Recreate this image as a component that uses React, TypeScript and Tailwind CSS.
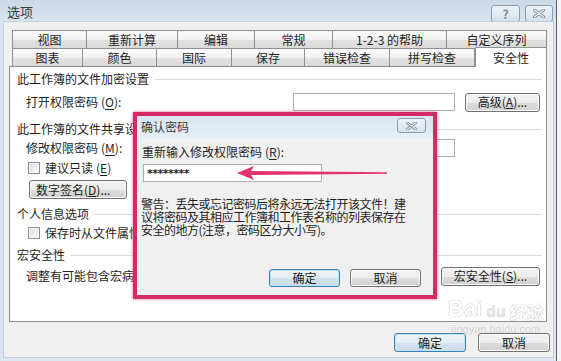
import type { ReactNode } from "react"
import clsx from "clsx"

const FONT = "font-['Noto_Sans_CJK_SC','Noto_Sans',sans-serif]"

function Btn({
  children,
  className,
  primary,
}: {
  children: ReactNode
  className?: string
  primary?: boolean
}) {
  return (
    <div
      className={clsx(
        "flex items-center justify-center rounded-[3px] border text-[12px] leading-none text-[#1b1b1b]",
        primary
          ? "border-[#3c7fb1] bg-[linear-gradient(#f0f6fa_0%,#e4eef5_50%,#d5e3ee_51%,#c9dbe8_100%)] shadow-[inset_0_0_0_1px_#bfe6f7]"
          : "border-[#707070] bg-[linear-gradient(#f4f4f4_0%,#ececec_50%,#dedede_51%,#d0d0d0_100%)] shadow-[inset_0_0_0_1px_#fbfbfb]",
        className
      )}
    >
      {children}
    </div>
  )
}

function Key({ k }: { k: string }) {
  return (
    <span className="ml-[3px]">
      (<u className="underline-offset-2">{k}</u>)
    </span>
  )
}

function Section({ title, className }: { title: string; className?: string }) {
  return (
    <div className={clsx("flex h-[14px] items-center pl-[7px]", className)}>
      <span className="text-[12px] leading-none whitespace-nowrap">{title}</span>
      <div className="ml-[6px] mr-[4px] h-px flex-1 bg-[#d5dfe5]" />
    </div>
  )
}

function Check({ children, className }: { children: ReactNode; className?: string }) {
  return (
    <div className={clsx("flex h-[14px] items-center pl-[18px]", className)}>
      <div className="h-[12px] w-[12px] border border-[#8e8f8f] bg-[linear-gradient(135deg,#dcdcdc,#fbfbfb)] shadow-[inset_0_0_0_1px_#f4f4f4]" />
      <span className="ml-[5px] text-[12px] leading-none whitespace-nowrap">{children}</span>
    </div>
  )
}

function Tab({ label, w, first, selected }: { label: string; w: number; first?: boolean; selected?: boolean }) {
  return (
    <div
      style={{ width: w }}
      className={clsx(
        "flex shrink-0 items-center justify-center border-t border-r border-[#8d9096] text-[12px] leading-none",
        first && "border-l",
        selected
          ? "relative z-10 -mt-[1px] h-[20px] border-l bg-white"
          : "h-[18px] bg-[linear-gradient(#fdfdfd_0%,#f0f0f0_50%,#e2e2e2_51%,#dadada_100%)]"
      )}
    >
      {label}
    </div>
  )
}

function CloseGlyph({ w = 12, h = 9 }: { w?: number; h?: number }) {
  return (
    <svg width={w} height={h} viewBox="0 0 12 9">
      <path d="M1.5 1 L10.5 8 M10.5 1 L1.5 8" stroke="#7f8b99" strokeWidth="3" strokeLinecap="round" />
      <path d="M1.5 1 L10.5 8 M10.5 1 L1.5 8" stroke="#f5f7fa" strokeWidth="1.2" strokeLinecap="round" />
    </svg>
  )
}

export default function App() {
  const row1 = [
    ["视图", 75],
    ["重新计算", 91],
    ["编辑", 77],
    ["常规", 78],
    ["1-2-3 的帮助", 114],
    ["自定义序列", 100],
  ] as const
  const row2 = [
    ["图表", 71],
    ["颜色", 74],
    ["国际", 75],
    ["保存", 73],
    ["错误检查", 85],
    ["拼写检查", 85],
  ] as const

  return (
    <div className={clsx("relative flex h-[361px] w-[561px] overflow-hidden bg-[#f4f4f4] text-[#1e1e1e]", FONT)}>
      {/* window frame */}
      <div className="flex h-full w-[557px] flex-col border-r border-[#5d5f62] bg-[linear-gradient(#cad8e7_0px,#d9e4ef_22px,#dce6f0_100%)]">
        {/* title bar */}
        <div className="flex h-[22px] shrink-0 items-start">
          <span className="pl-[7px] pt-[5px] text-[13px] leading-none text-[#3a3a3a]">选项</span>
          <div className="ml-auto mr-[3px] mt-[5px] flex gap-[5px]">
            <div className="flex h-[17px] w-[29px] items-center justify-center rounded-[3px] border border-[#8d9db0] bg-[linear-gradient(#eef3f8,#d6e1ec)] text-[12px] font-bold leading-none text-[#7b8795]">
              ?
            </div>
            <div className="flex h-[17px] w-[28px] items-center justify-center rounded-[3px] border border-[#8d9db0] bg-[linear-gradient(#eef3f8,#d6e1ec)]">
              <CloseGlyph />
            </div>
          </div>
        </div>

        {/* client area */}
        <div className="mb-[4px] ml-[4px] mr-[3px] flex flex-1 flex-col bg-[#f0f0f0] pt-[8px] shadow-[0_0_0_1px_#c3d0dc]">
          {/* tabs */}
          <div className="ml-[8px] flex w-[535px]">
            {row1.map(([l, w], i) => (
              <Tab key={l} label={l} w={w} first={i === 0} />
            ))}
          </div>
          <div className="ml-[8px] flex h-[18px] w-[535px] items-start">
            {row2.map(([l, w], i) => (
              <Tab key={l} label={l} w={w} first={i === 0} />
            ))}
            <Tab label="安全性" w={72} selected />
          </div>

          {/* panel */}
          <div className="ml-[5px] flex h-[256px] w-[538px] flex-col border border-[#898c95] bg-white">
            <Section title="此工作簿的文件加密设置" className="mt-[5px]" />
            <div className="mt-[6px] flex h-[20px] items-center">
              <span className="pl-[16px] text-[12px] leading-none">
                打开权限密码<Key k="O" />:
              </span>
              <div className="ml-auto h-[18px] w-[162px] border border-[#abadb3] bg-white" />
              <Btn className="ml-[10px] mr-[6px] h-[19px] w-[75px]">
                高级(<u>A</u>)...
              </Btn>
            </div>

            <Section title="此工作簿的文件共享设置" className="mt-[10px]" />
            <div className="mt-[2px] flex h-[20px] items-center">
              <span className="pl-[16px] text-[12px] leading-none">
                修改权限密码<Key k="M" />:
              </span>
              <div className="ml-auto mr-[91px] h-[18px] w-[162px] border border-[#abadb3] bg-white" />
            </div>
            <Check className="mt-[3px]">
              建议只读<Key k="E" />
            </Check>
            <div className="mt-[5px] pl-[19px]">
              <Btn className="h-[19px] w-[98px] justify-start pl-[6px]">
                数字签名(<u>D</u>)...
              </Btn>
            </div>

            <Section title="个人信息选项" className="mt-[8px]" />
            <Check className="mt-[5px]">保存时从文件属性中删除个人信息</Check>

            <Section title="宏安全性" className="mt-[8px]" />
            <div className="mt-[3px] flex h-[22px] items-center">
              <span className="pl-[16px] text-[12px] leading-none">调整有可能包含宏病毒的文件的安全级别</span>
              <Btn className="ml-auto mr-[6px] h-[19px] w-[99px]">
                宏安全性(<u>S</u>)...
              </Btn>
            </div>
          </div>

          {/* bottom buttons */}
          <div className="mr-[3px] mt-[11px] flex justify-end gap-[12px]">
            <Btn primary className="h-[19px] w-[72px]">
              确定
            </Btn>
            <Btn className="h-[19px] w-[72px]">取消</Btn>
          </div>
        </div>
      </div>

      {/* highlighted confirm dialog lying over the options window */}
      <div className="absolute left-[133px] top-[112px] flex h-[187px] w-[304px] flex-col border-[4px] border-[#d52a64] shadow-[0_0_3px_#e06a92]">
        <div className="flex h-[22px] shrink-0 items-start bg-[linear-gradient(#d9e5f1,#e6eef6)]">
          <span className="pl-[4px] pt-[5px] text-[12px] leading-none text-[#3a3a3a]">确认密码</span>
          <div className="ml-auto mr-[7px] mt-[2px] flex h-[15px] w-[29px] items-center justify-center rounded-[3px] border border-[#8d9db0] bg-[linear-gradient(#eef3f8,#d6e1ec)]">
            <CloseGlyph w={11} h={8} />
          </div>
        </div>
        <div className="relative flex flex-1 flex-col bg-[#f0f0f0]">
          <div className="mt-[7px] flex h-[14px] items-center pl-[5px] text-[12px] leading-none">
            重新输入修改权限密码<Key k="R" />:
          </div>
          <div className="ml-[6px] mt-[5px] flex h-[18px] w-[179px] items-center border border-[#abadb3] bg-white pl-[3px] font-['DejaVu_Sans',sans-serif] text-[11px] font-bold leading-none tracking-[-0.5px]">
            ********
          </div>
          <div className="mt-[15px] pl-[4px] text-[12px] leading-[13px] tracking-[-0.5px]">
            <div>警告：丢失或忘记密码后将永远无法打开该文件！建</div>
            <div>议将密码及其相应工作簿和工作表名称的列表保存在</div>
            <div>安全的地方(注意，密码区分大小写)。</div>
          </div>
          <div className="mb-[8px] mr-[12px] mt-auto flex justify-end gap-[10px]">
            <Btn primary className="h-[18px] w-[71px]">
              确定
            </Btn>
            <Btn className="h-[18px] w-[71px]">取消</Btn>
          </div>

          {/* pink arrow annotation */}
          <svg className="absolute left-[100px] top-[27px]" width="155" height="16" viewBox="0 0 155 16">
            <defs>
              <filter id="soft" x="-10%" y="-50%" width="120%" height="200%">
                <feGaussianBlur stdDeviation="0.6" />
              </filter>
            </defs>
            <path
              d="M0 8 L17 1 L14 6 L150 7.3 L150 8.7 L14 10 L17 15 Z"
              fill="#e2336f"
              filter="url(#soft)"
            />
          </svg>
        </div>
      </div>

      {/* watermark */}
      <div className="pointer-events-none absolute left-[448px] top-[298px] flex flex-col items-center opacity-70">
        <div className="flex items-end gap-[2px]">
          <span className="font-['Liberation_Sans',sans-serif] text-[22px] font-bold leading-none text-white [text-shadow:0_0_1px_#9a9a9a,0_0_1px_#9a9a9a]">
            Bai
          </span>
          <span className="rounded-full bg-white/80 px-[2px] font-['Liberation_Sans',sans-serif] text-[16px] font-bold leading-none text-[#dcdcdc] [text-shadow:0_0_1px_#9a9a9a]">
            du
          </span>
          <span className="text-[17px] font-bold leading-none text-white [text-shadow:0_0_1px_#9a9a9a,0_0_1px_#9a9a9a]">
            经验
          </span>
        </div>
        <span className="mt-[4px] font-['Liberation_Sans',sans-serif] text-[11px] leading-none text-[#c8c8c8]">
          jingyan.baidu.com
        </span>
      </div>
    </div>
  )
}
